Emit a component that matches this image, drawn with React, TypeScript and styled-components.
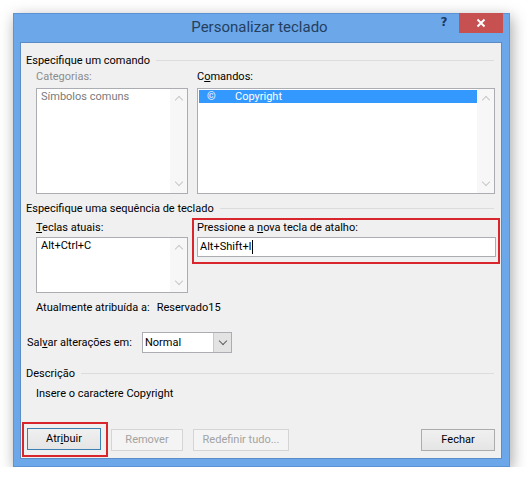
import React from "react";
import styled, { createGlobalStyle } from "styled-components";

const GlobalStyle = createGlobalStyle`
	body {
		margin: 0;
		background: #ffffff;
		font-family: Roboto, "Noto Sans", sans-serif;
		font-size: 11px;
		color: #000000;
	}
`;

const App = () => {
	return (
		<>
			<GlobalStyle />
			<Page>
				<Window>
					<TitleBar>
						<span />
						<Title>Personalizar teclado</Title>
						<Controls>
							<HelpButton>?</HelpButton>
							<CloseButton>
								<svg width="10" height="10" viewBox="0 0 10 10">
									<path d="M1.5 1.5 L8.5 8.5 M8.5 1.5 L1.5 8.5" stroke="#ffffff" strokeWidth="2" />
								</svg>
							</CloseButton>
						</Controls>
					</TitleBar>
					<Content>
						<GroupHeader>Especifique um comando</GroupHeader>
						<CommandGrid>
							<Label disabled>Categorias:</Label>
							<Label>
								C<u>o</u>mandos:
							</Label>
							<ListBox height={106}>
								<Items>
									<Item disabled>Símbolos comuns</Item>
								</Items>
								<ScrollBar>
									<Chevron up />
									<Chevron />
								</ScrollBar>
							</ListBox>
							<ListBox height={106}>
								<Items>
									<Item selected>
										<Symbol>©</Symbol>Copyright
									</Item>
								</Items>
								<ScrollBar>
									<Chevron up />
									<Chevron />
								</ScrollBar>
							</ListBox>
						</CommandGrid>

						<GroupHeader top={7}>Especifique uma sequência de teclado</GroupHeader>
						<KeyGrid>
							<KeyColumn>
								<Label>
									<u>T</u>eclas atuais:
								</Label>
								<ListBox height={56}>
									<Items>
										<Item>Alt+Ctrl+C</Item>
									</Items>
									<ScrollBar>
										<Chevron up />
										<Chevron />
									</ScrollBar>
								</ListBox>
							</KeyColumn>
							<Highlight>
								<Label>
									Pressione a <u>n</u>ova tecla de atalho:
								</Label>
								<TextBox>
									Alt+Shift+I<Caret />
								</TextBox>
							</Highlight>
						</KeyGrid>
						<Assigned>
							<span>Atualmente atribuída a:</span>
							<span>Reservado15</span>
						</Assigned>

						<SaveRow>
							<span>
								Sal<u>v</u>ar alterações em:
							</span>
							<Select>
								<SelectValue>Normal</SelectValue>
								<SelectButton>
									<Chevron dark />
								</SelectButton>
							</Select>
						</SaveRow>

						<GroupHeader top={13}>Descrição</GroupHeader>
						<Description>Insere o caractere Copyright</Description>

						<Footer>
							<ButtonHighlight>
								<Button primary>
									Atr<u>i</u>buir
								</Button>
							</ButtonHighlight>
							<Button disabled width={72} gap={3}>
								Remover
							</Button>
							<Button disabled width={96} gap={10}>
								Redefinir tudo...
							</Button>
							<Spacer />
							<Button>Fechar</Button>
						</Footer>
					</Content>
				</Window>
			</Page>
		</>
	);
};

export default App;

const Page = styled.div`
	padding: 13px 0 0 13px;
`;

const Window = styled.div`
	width: 497px;
	height: 454px;
	box-sizing: border-box;
	background: #6ba7e9;
	border: 1px solid #5b93d4;
	box-shadow: 2px 4px 14px rgba(0, 0, 0, 0.35);
	display: flex;
	flex-direction: column;
`;

const TitleBar = styled.div`
	height: 28px;
	display: grid;
	grid-template-columns: 1fr auto 1fr;
	align-items: start;
`;

const Title = styled.div`
	font-size: 15px;
	line-height: 27px;
	color: #253f5e;
	padding-right: 4px;
`;

const Controls = styled.div`
	justify-self: end;
	display: flex;
	align-items: flex-start;
	margin-right: 6px;
	margin-top: -1px;
`;

const HelpButton = styled.div`
	width: 26px;
	height: 20px;
	line-height: 19px;
	font-family: "DejaVu Sans", sans-serif;
	font-weight: bold;
	font-size: 12px;
	color: #1b3a63;
	text-align: center;
	padding-right: 4px;
	box-sizing: border-box;
`;

const CloseButton = styled.div`
	width: 44px;
	height: 20px;
	background: #c75050;
	display: flex;
	align-items: center;
	justify-content: center;
`;

const Content = styled.div`
	flex: 1;
	margin: 0 7px 7px 6px;
	background: #f0f0f0;
	border: 1px solid #5a8cc6;
	padding: 10px 0 1px 0;
	display: flex;
	flex-direction: column;
`;

const GroupHeader = styled.div<{ top?: number }>`
	display: flex;
	align-items: center;
	gap: 6px;
	height: 15px;
	line-height: 15px;
	margin: ${(p) => p.top || 0}px 7px 0 5px;
	&::after {
		content: "";
		flex: 1;
		border-top: 1px solid #dcdcdc;
	}
`;

const CommandGrid = styled.div`
	display: grid;
	grid-template-columns: 152px 298px;
	column-gap: 9px;
	row-gap: 4px;
	margin: 1px 0 0 15px;
`;

const Label = styled.div<{ disabled?: boolean }>`
	line-height: 15px;
	color: ${(p) => (p.disabled ? "#8c8c8c" : "#000000")};
	white-space: nowrap;
`;

const ListBox = styled.div<{ height: number }>`
	height: ${(p) => p.height}px;
	box-sizing: border-box;
	border: 1px solid #abadb3;
	background: #ffffff;
	display: flex;
`;

const Items = styled.div`
	flex: 1;
	padding: 1px 0 0 1px;
`;

const Item = styled.div<{ selected?: boolean; disabled?: boolean }>`
	height: 13px;
	line-height: 13px;
	padding-left: 3px;
	white-space: nowrap;
	background: ${(p) => (p.selected ? "#3399ff" : "transparent")};
	color: ${(p) => (p.selected ? "#ffffff" : p.disabled ? "#7a7a7a" : "#000000")};
`;

const Symbol = styled.span`
	display: inline-block;
	width: 33px;
	padding-left: 5px;
	box-sizing: border-box;
`;

const ScrollBar = styled.div`
	width: 17px;
	background: #f7f7f7;
	display: flex;
	flex-direction: column;
	justify-content: space-between;
	align-items: center;
	padding: 6px 0;
	box-sizing: border-box;
`;

const Chevron = styled.div<{ up?: boolean; dark?: boolean }>`
	width: 5px;
	height: 5px;
	border-right: 1.5px solid ${(p) => (p.dark ? "#606060" : "#c8c8c8")};
	border-bottom: 1.5px solid ${(p) => (p.dark ? "#606060" : "#c8c8c8")};
	transform: ${(p) => (p.up ? "translateY(2px) rotate(-135deg)" : "translateY(-2px) rotate(45deg)")};
`;

const KeyGrid = styled.div`
	display: grid;
	grid-template-columns: 152px 308px;
	column-gap: 4px;
	margin: 2px 0 0 15px;
	align-items: start;
`;

const KeyColumn = styled.div`
	display: flex;
	flex-direction: column;
	gap: 2px;
	padding-top: 2px;
`;

const Highlight = styled.div`
	height: 46px;
	box-sizing: border-box;
	border: 2px solid #d9262c;
	padding: 0 2px 0 3px;
	display: flex;
	flex-direction: column;
	gap: 2px;
`;

const TextBox = styled.div`
	height: 20px;
	box-sizing: border-box;
	border: 1px solid #abadb3;
	background: #ffffff;
	padding-left: 2px;
	line-height: 18px;
	display: flex;
	align-items: center;
`;

const Caret = styled.span`
	width: 1px;
	height: 14px;
	background: #000000;
`;

const Assigned = styled.div`
	display: flex;
	gap: 7px;
	line-height: 15px;
	margin: 7px 0 0 15px;
`;

const SaveRow = styled.div`
	display: grid;
	grid-template-columns: 115px 90px;
	align-items: center;
	margin: 17px 0 0 6px;
	white-space: nowrap;
`;

const Select = styled.div`
	height: 21px;
	box-sizing: border-box;
	border: 1px solid #abadb3;
	background: #ffffff;
	display: flex;
`;

const SelectValue = styled.div`
	flex: 1;
	padding-left: 2px;
	line-height: 19px;
`;

const SelectButton = styled.div`
	width: 17px;
	background: #e3e3e3;
	border-left: 1px solid #c9c9c9;
	display: flex;
	align-items: center;
	justify-content: center;
`;

const Description = styled.div`
	line-height: 15px;
	margin: 5px 0 0 15px;
`;

const Footer = styled.div`
	margin-top: auto;
	display: flex;
	align-items: center;
	padding: 0 6px 0 1px;
`;

const ButtonHighlight = styled.div`
	border: 2px solid #d9262c;
	padding: 4px 5px 5px 3px;
`;

const Button = styled.div<{ primary?: boolean; disabled?: boolean; width?: number; gap?: number }>`
	width: ${(p) => p.width || 74}px;
	height: 22px;
	box-sizing: border-box;
	margin-left: ${(p) => p.gap || 0}px;
	border: 1px solid ${(p) => (p.primary ? "#3c7fb1" : p.disabled ? "#d5d5d5" : "#acacac")};
	background: ${(p) => (p.disabled ? "#f4f4f4" : "linear-gradient(#f0f0f0, #e5e5e5)")};
	color: ${(p) => (p.disabled ? "#a3a3a3" : "#000000")};
	text-align: center;
	line-height: 20px;
	white-space: nowrap;
`;

const Spacer = styled.div`
	flex: 1;
`;
